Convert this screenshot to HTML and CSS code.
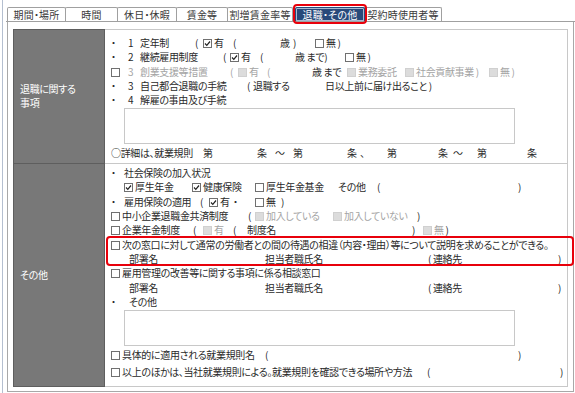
FILE: index.html
```html
<!DOCTYPE html>
<html lang="ja">
<head>
<meta charset="UTF-8">
<meta name="viewport" content="width=device-width, initial-scale=1.0">
<title>退職・その他</title>
<link rel="stylesheet" href="styles.css">
</head>
<body>
<div class="frame">
    <div class="tabs">
        <div class="tab t1">期間・場所</div>
        <div class="tab t2">時間</div>
        <div class="tab t3">休日・休暇</div>
        <div class="tab t4">賃金等</div>
        <div class="tab t5">割増賃金率等</div>
        <div class="tab t6 active">退職・その他</div>
        <div class="tab t7">契約時使用者等</div>
    </div>
    <div class="panel">
        <table class="form-table">
            <colgroup>
                <col class="col-label">
                <col>
            </colgroup>
            <tr>
                <th class="label">退職に関する<br>事項</th>
                <td class="cell sec1">
                    <div class="row"><span class="w17">・</span><span class="w12">1</span><span class="w55">定年制</span><span class="w8">(</span><span class="cb on"><svg viewBox="0 0 7 7"><path d="M1 3.5 2.8 5.3 6 1.5"/></svg></span><span class="w19">有</span><span class="w47">(</span><span class="w13">歳</span><span class="w22">)</span><span class="cb"></span><span>無&nbsp;)</span></div>
                    <div class="row"><span class="w17">・</span><span class="w12">2</span><span class="w83">継続雇用制度</span><span class="w7">(</span><span class="cb on"><svg viewBox="0 0 7 7"><path d="M1 3.5 2.8 5.3 6 1.5"/></svg></span><span class="w19">有</span><span class="w35">(</span><span class="w50">歳 まで)</span><span class="cb"></span><span>無&nbsp;)</span></div>
                    <div class="row"><span class="w17"><span class="cb"></span></span><span class="w12 dim">3</span><span class="w90 dim">創業支援等措置</span><span class="w8 dim">(</span><span class="cb dis"></span><span class="w18 dim">有</span><span class="w45 dim">(</span><span class="w35">歳 まで</span><span class="cb dis"></span><span class="w47 dim">業務委託</span><span class="cb dis"></span><span class="w73 dim">社会貢献事業&nbsp;)</span><span class="cb dis"></span><span class="dim">無&nbsp;)</span></div>
                    <div class="row"><span class="w17">・</span><span class="w12">3</span><span class="w107">自己都合退職の手続</span><span class="w6">(</span><span class="w72">退職する</span><span>日以上前に届け出ること&nbsp;)</span></div>
                    <div class="row"><span class="w17">・</span><span class="w12">4</span><span>解雇の事由及び手続</span></div>
                    <textarea class="memo"></textarea>
                    <div class="row"><span class="w92">○詳細は、就業規則</span><span class="w54">第</span><span class="w18">条</span><span class="w18">～</span><span class="w54">第</span><span class="w13">条</span><span class="w27">、</span><span class="w51">第</span><span class="w15">条</span><span class="w24">～</span><span class="w50">第</span><span>条</span></div>
                </td>
            </tr>
            <tr>
                <th class="label">その他</th>
                <td class="cell sec2">
                    <div class="row"><span class="w13">・</span><span>社会保険の加入状況</span></div>
                    <div class="row"><span class="w13"></span><span class="cb on"><svg viewBox="0 0 7 7"><path d="M1 3.5 2.8 5.3 6 1.5"/></svg></span><span class="w57">厚生年金</span><span class="cb on"><svg viewBox="0 0 7 7"><path d="M1 3.5 2.8 5.3 6 1.5"/></svg></span><span class="w52">健康保険</span><span class="cb"></span><span class="w72">厚生年金基金</span><span class="w39">その他</span><span class="w141">(</span><span>)</span></div>
                    <div class="row"><span class="w13">・</span><span class="w76">雇用保険の適用</span><span class="w9">(</span><span class="cb on"><svg viewBox="0 0 7 7"><path d="M1 3.5 2.8 5.3 6 1.5"/></svg></span><span class="w13">有</span><span class="w22">・</span><span class="cb"></span><span class="w15">無</span><span>)</span></div>
                    <div class="row"><span class="cb"></span><span class="w126">中小企業退職金共済制度</span><span class="w7">(</span><span class="cb dis"></span><span class="w67 dim">加入している</span><span class="cb dis"></span><span class="w73 dim">加入していない</span><span>)</span></div>
                    <div class="row"><span class="cb"></span><span class="w71">企業年金制度</span><span class="w10">(</span><span class="cb dis"></span><span class="w19 dim">有</span><span class="w14">(</span><span class="w165">制度名</span><span class="w11">)</span><span class="cb dis"></span><span class="dim">無</span><span>&nbsp;)</span></div>
                    <div class="notice">
                        <div class="row"><span class="cb"></span><span>次の窓口に対して通常の労働者との間の待遇の相違（内容・理由）等について説明を求めることができる。</span></div>
                        <div class="row"><span class="w18"></span><span class="w136">部署名</span><span class="w163">担当者職氏名</span><span class="w130">(&nbsp;連絡先</span><span>)</span></div>
                    </div>
                    <div class="row"><span class="cb"></span><span>雇用管理の改善等に関する事項に係る相談窓口</span></div>
                    <div class="row"><span class="w18"></span><span class="w136">部署名</span><span class="w163">担当者職氏名</span><span class="w130">(&nbsp;連絡先</span><span>)</span></div>
                    <div class="row"><span class="w18">・</span><span>その他</span></div>
                    <textarea class="memo"></textarea>
                    <div class="row gap"><span class="cb"></span><span class="w143">具体的に適用される就業規則名</span><span class="w253">(</span><span>)</span></div>
                    <div class="row gap"><span class="cb"></span><span class="w305">以上のほかは、当社就業規則による。就業規則を確認できる場所や方法</span><span class="w133">(</span><span>)</span></div>
                </td>
            </tr>
        </table>
    </div>
</div>
</body>
</html>
```

FILE: styles.css
```css
body {
    margin: 0;
    background: #fff;
    font-family: "Noto Sans CJK JP", "Noto Sans", sans-serif;
    font-size: 10px;
    letter-spacing: -0.35px;
    font-feature-settings: "palt";
    color: #2a2a2a;
}

.frame {
    margin-left: 2px;
    padding: 7px 0 0 4px;
    border-left: 1px solid #b4bfd0;
    height: 386px;
}

/* tabs */
.tabs {
    display: flex;
    align-items: flex-end;
    padding-left: 1px;
    border-bottom: 1px solid #a0a0a0;
    margin-left: -1px;
}

.tab {
    box-sizing: border-box;
    height: 14px;
    line-height: 13px;
    border: 1px solid #a0a0a0;
    border-bottom: none;
    border-radius: 2px 2px 0 0;
    margin-right: -1px;
    text-align: center;
    background: #fff;
    color: #3a3a3a;
    white-space: nowrap;
    letter-spacing: 0.2px;
}

.t1 { width: 59px; }
.t2 { width: 53px; }
.t3 { width: 60px; }
.t4 { width: 52px; }
.t5 { width: 66px; }
.t6 { width: 70px; margin-left: 3px; }
.t7 { width: 78px; }

.tab.active {
    position: relative;
    background: #284a7a;
    border-color: #284a7a;
    box-shadow: inset 0 0 0 1px #a9bad2;
    color: #fff;
}

.tab.active::after {
    content: "";
    position: absolute;
    left: -3px;
    right: -3px;
    top: -4px;
    bottom: -3px;
    border: 2px solid #e8000b;
    border-radius: 4px;
}

/* panel */
.panel {
    border: 1px solid #a8a8a8;
    border-top: none;
    width: 555px;
    padding: 7px 5px 4px 5px;
}

.form-table {
    border-collapse: collapse;
    table-layout: fixed;
    width: 555px;
}

.col-label {
    width: 91px;
}

.form-table th,
.form-table td {
    border: 1px solid #c8c8c8;
    padding: 0;
}

.label {
    background: #787878;
    color: #fff;
    font-weight: normal;
    text-align: left;
    vertical-align: middle;
    padding-left: 6px !important;
    line-height: 14px;
    border-color: #5e5e5e !important;
}

.cell {
    vertical-align: top;
    padding-left: 6px !important;
}

.sec1 {
    padding-top: 6px !important;
    padding-bottom: 3px !important;
}

.sec2 {
    padding-top: 2px !important;
    padding-bottom: 7px !important;
}

.row {
    height: 14.33px;
    line-height: 14.33px;
    white-space: nowrap;
}

.row.gap {
    margin-top: 2px;
}

.row > span {
    display: inline-block;
    vertical-align: top;
}

.dim {
    color: #a4a4a4;
}

/* checkboxes */
.cb {
    box-sizing: border-box;
    display: inline-block;
    width: 9px;
    height: 9px;
    margin: 3px 2px 0 0;
    border: 1px solid #707070;
    background: #fff;
    vertical-align: top;
}

.row > span.cb {
    vertical-align: top;
}

.cb svg {
    display: block;
    width: 7px;
    height: 7px;
    fill: none;
    stroke: #222;
    stroke-width: 1.2;
}

.cb.dis {
    background: #dcdcdc;
    border-color: #d0d0d0;
}

.memo {
    display: block;
    box-sizing: border-box;
    width: 391px;
    height: 36px;
    margin: 0 0 2px 13px;
    border: 1px solid #c8c8c8;
    background: #fff;
    resize: none;
    padding: 0;
}

.sec2 .memo {
    margin-top: 1px;
    margin-bottom: 0;
}

.notice {
    position: relative;
}

.notice::before {
    content: "";
    position: absolute;
    left: -5px;
    right: -7px;
    top: -2px;
    bottom: 0;
    border: 2px solid #e8000b;
    border-radius: 4px;
}

/* fixed column widths */
.w6 { width: 6px; }
.w7 { width: 7px; }
.w8 { width: 8px; }
.w9 { width: 9px; }
.w10 { width: 10px; }
.w11 { width: 11px; }
.w12 { width: 12px; }
.w13 { width: 13px; }
.w14 { width: 14px; }
.w15 { width: 15px; }
.w17 { width: 17px; }
.w18 { width: 18px; }
.w19 { width: 19px; }
.w22 { width: 22px; }
.w24 { width: 24px; }
.w27 { width: 27px; }
.w35 { width: 35px; }
.w39 { width: 39px; }
.w45 { width: 45px; }
.w47 { width: 47px; }
.w50 { width: 50px; }
.w51 { width: 51px; }
.w52 { width: 52px; }
.w54 { width: 54px; }
.w55 { width: 55px; }
.w57 { width: 57px; }
.w67 { width: 67px; }
.w71 { width: 71px; }
.w72 { width: 72px; }
.w73 { width: 73px; }
.w76 { width: 76px; }
.w83 { width: 83px; }
.w90 { width: 90px; }
.w92 { width: 92px; }
.w107 { width: 107px; }
.w126 { width: 126px; }
.w130 { width: 130px; }
.w133 { width: 133px; }
.w136 { width: 136px; }
.w141 { width: 141px; }
.w143 { width: 143px; }
.w163 { width: 163px; }
.w165 { width: 165px; }
.w253 { width: 253px; }
.w305 { width: 305px; }
```
